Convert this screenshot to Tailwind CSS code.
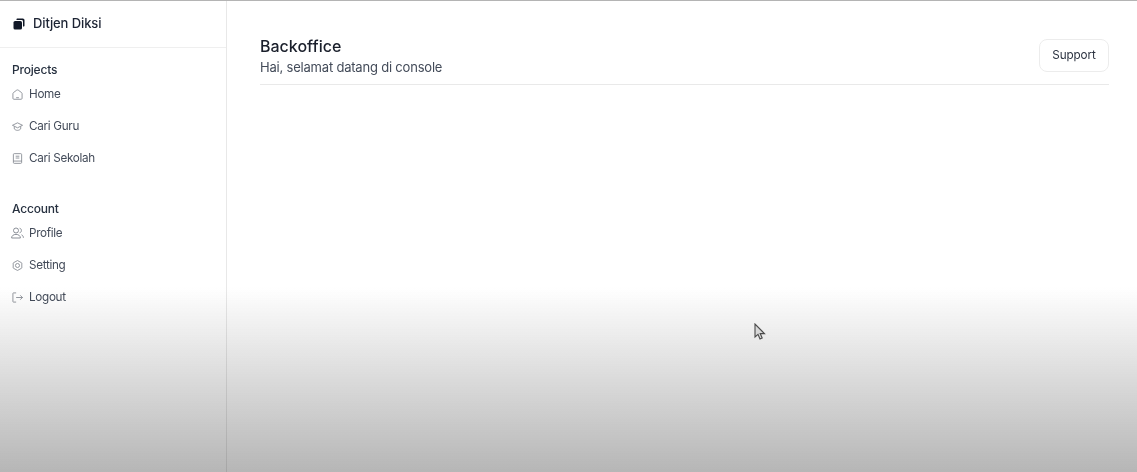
<!DOCTYPE html>
<html lang="en">
<head>
    <meta charset="UTF-8">
    <meta name="viewport" content="width=device-width, initial-scale=1.0">
    <title>Backoffice - Ditjen Diksi</title>
    <script src="https://cdn.jsdelivr.net/npm/@tailwindcss/browser@4"></script>
</head>
<body class="bg-white font-['Inter',sans-serif] overflow-hidden">
    <div class="relative flex h-[472px] w-[1137px] border-t border-[#b4b4b4]">
        <!-- Sidebar -->
        <aside class="w-[227px] shrink-0 border-r border-[#e8e8e8] blur-[0.35px]">
            <div class="flex h-[47px] items-center gap-[8px] border-b border-[#efefef] pl-[13px]">
                <svg class="h-[12px] w-[12px]" viewBox="0 0 12 12" fill="#111827">
                    <path d="M3.5 1.2C3.5.8 3.8.5 4.200.5h5.600c1 0 1.700.8 1.700 1.700v5.600c0 .4-.3.7-.7.7H10V3.400C10 2.600 9.400 2 8.600 2H3.500z"/>
                    <rect x="0.5" y="3" width="8.500" height="8.500" rx="1.600"/>
                </svg>
                <span class="text-[13px] font-medium tracking-[-0.1px] text-[#1c2333]">Ditjen Diksi</span>
            </div>

            <nav class="pl-[12px] pt-[14px]">
                <h2 class="h-[16px] text-[12px] leading-[16px] font-medium tracking-[-0.2px] text-[#26303f]">Projects</h2>
                <ul class="mt-[1px] text-[11.7px] tracking-[-0.3px] text-[#434b59]">
                    <li class="flex h-[32px] items-center gap-[6px]">
                        <svg class="h-[11px] w-[11px] -translate-y-[1px]" viewBox="0 0 12 12" fill="none" stroke="#7f848d" stroke-width="0.9">
                            <path d="M1 5c0-.4.2-.8.5-1l3.700-2.800c.5-.3 1.100-.3 1.600 0L10.500 4c.3.2.5.6.5 1v5.200c0 .6-.4 1-1 1H2c-.6 0-1-.4-1-1z"/><path d="M4.500 9.500h3"/>
                        </svg>
                        Home
                    </li>
                    <li class="flex h-[32px] items-center gap-[6px]">
                        <svg class="h-[11px] w-[11px] -translate-y-[1px]" viewBox="0 0 12 12" fill="none" stroke="#7f848d" stroke-width="0.9">
                            <path d="M.5 4.700 6 2l5.500 2.700L6 7.400z"/><path d="M2.500 6v2.600C3.500 9.700 4.700 10.200 6 10.200s2.500-.5 3.500-1.600V6"/>
                        </svg>
                        Cari Guru
                    </li>
                    <li class="flex h-[32px] items-center gap-[6px]">
                        <svg class="h-[11px] w-[11px] -translate-y-[1px]" viewBox="0 0 12 12" fill="none" stroke="#7f848d" stroke-width="0.9">
                            <rect x="1.500" y="0.700" width="9" height="10.600" rx="1"/><path d="M4 3.500h4M4 5.500h4M1.500 8.800h9"/>
                        </svg>
                        Cari Sekolah
                    </li>
                </ul>

                <h2 class="mt-[26px] h-[16px] text-[12px] leading-[16px] font-medium tracking-[-0.2px] text-[#26303f]">Account</h2>
                <ul class="mt-[1px] text-[11.7px] tracking-[-0.3px] text-[#434b59]">
                    <li class="flex h-[32px] items-center gap-[5px]">
                        <svg class="-ml-[1px] h-[12px] w-[13px] -translate-y-[1px]" viewBox="0 0 13 12" fill="none" stroke="#7f848d" stroke-width="0.9">
                            <circle cx="5" cy="3.500" r="2.500"/><path d="M.6 11c0-2.200 1.800-3.600 4.400-3.600S9.400 8.800 9.400 11z"/><path d="M8.600 1.200c1.100.2 1.800 1.100 1.800 2.300S9.700 5.600 8.600 5.800M10.500 7.800c1.200.5 1.900 1.600 1.900 3"/>
                        </svg>
                        Profile
                    </li>
                    <li class="flex h-[32px] items-center gap-[6px]">
                        <svg class="h-[11px] w-[11px] -translate-y-[1px]" viewBox="0 0 12 12" fill="none" stroke="#7f848d" stroke-width="0.9">
                            <path d="M6 .6 10.400 3c.2.100.3.300.3.500v5c0 .2-.1.400-.3.500L6 11.400 1.600 9c-.2-.1-.3-.3-.3-.5v-5c0-.2.100-.4.300-.5z"/><circle cx="6" cy="6" r="2.200"/>
                        </svg>
                        Setting
                    </li>
                    <li class="flex h-[32px] items-center gap-[6px]">
                        <svg class="h-[11px] w-[11px] -translate-y-[1px]" viewBox="0 0 12 12" fill="none" stroke="#7f848d" stroke-width="0.9">
                            <path d="M4.500 1H1.500C1.200 1 1 1.200 1 1.500v9c0 .3.200.5.500.5h3"/><path d="M4.500 6h7M9 3.600 11.400 6 9 8.400"/>
                        </svg>
                        Logout
                    </li>
                </ul>
            </nav>
        </aside>

        <!-- Main -->
        <main class="flex-1 pl-[33px] pr-[28px] pt-[37px] blur-[0.35px]">
            <header class="flex h-[47px] items-start justify-between border-b border-[#e9e9e9]">
                <div>
                    <h1 class="text-[16px] leading-[17px] font-medium text-[#1a1f2b]">Backoffice</h1>
                    <p class="mt-[4px] text-[13px] leading-[16px] tracking-[-0.2px] text-[#434b59]">Hai, selamat datang di console</p>
                </div>
                <button class="mt-[1px] h-[33px] w-[70px] rounded-[8px] border border-[#ececec] bg-white text-[11.7px] font-normal tracking-[-0.1px] text-[#2b3240]">Support</button>
            </header>
        </main>

        <!-- Video fade over the lower part -->
        <div class="pointer-events-none absolute inset-x-0 bottom-0 h-[185px] bg-gradient-to-b from-white/0 to-[#b6b6b6] mix-blend-multiply"></div>

        <!-- Mouse cursor -->
        <svg class="absolute left-[754px] top-[322px] h-[18px] w-[12px]" viewBox="0 0 12 18" fill="#d8d8d8" stroke="#4a4a4a" stroke-width="1.100">
            <path d="M1 1v13l3-2.600 2 4.600 2.200-1-2-4.400H10.500z"/>
        </svg>
    </div>
</body>
</html>
